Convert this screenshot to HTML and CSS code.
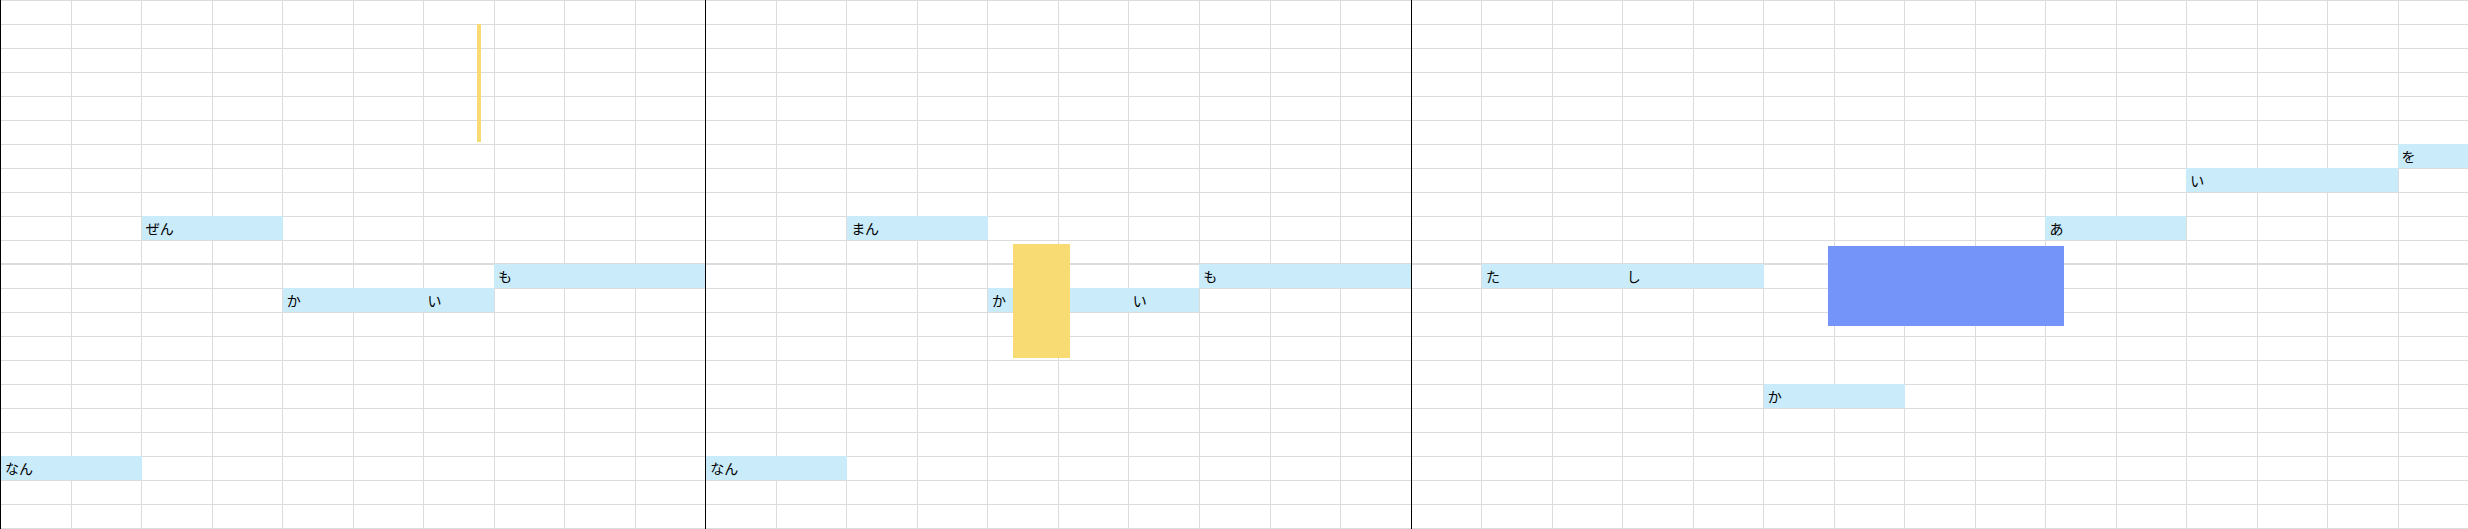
FILE: index.html
```html
<!DOCTYPE html>
<html lang="ja">

<head>
    <meta charset="UTF-8">
    <title>ピアノロール</title>
    <link rel="stylesheet" href="styles.css">
</head>

<body>
    <!-- ロール全体 -->
    <div class="roll">

        <!-- 1小節目 -->
        <div class="bar bar-10">
            <div class="col"></div><div class="col"></div><div class="col"></div><div class="col"></div><div class="col"></div>
            <div class="col"></div><div class="col"></div><div class="col"></div><div class="col"></div><div class="col"></div>

            <div class="note" style="--x:2;--w:2;--y:9">ぜん</div>
            <div class="note" style="--x:7;--w:3;--y:11">も</div>
            <div class="note" style="--x:4;--w:2;--y:12">か</div>
            <div class="note" style="--x:6;--w:1;--y:12">い</div>
            <div class="note" style="--x:0;--w:2;--y:19">なん</div>

            <div class="cursor"></div>
        </div>

        <!-- 2小節目 -->
        <div class="bar bar-10">
            <div class="col"></div><div class="col"></div><div class="col"></div><div class="col"></div><div class="col"></div>
            <div class="col"></div><div class="col"></div><div class="col"></div><div class="col"></div><div class="col"></div>

            <div class="note" style="--x:2;--w:2;--y:9">まん</div>
            <div class="note" style="--x:7;--w:3;--y:11">も</div>
            <div class="note" style="--x:4;--w:2;--y:12">か</div>
            <div class="note" style="--x:6;--w:1;--y:12">い</div>
            <div class="note" style="--x:0;--w:2;--y:19">なん</div>

            <div class="marker"></div>
        </div>

        <!-- 3小節目 -->
        <div class="bar bar-15">
            <div class="col"></div><div class="col"></div><div class="col"></div><div class="col"></div><div class="col"></div>
            <div class="col"></div><div class="col"></div><div class="col"></div><div class="col"></div><div class="col"></div>
            <div class="col"></div><div class="col"></div><div class="col"></div><div class="col"></div><div class="col"></div>

            <div class="note" style="--x:14;--w:1;--y:6">を</div>
            <div class="note" style="--x:11;--w:3;--y:7">い</div>
            <div class="note" style="--x:9;--w:2;--y:9">あ</div>
            <div class="note" style="--x:1;--w:2;--y:11">た</div>
            <div class="note" style="--x:3;--w:2;--y:11">し</div>
            <div class="note" style="--x:5;--w:2;--y:16">か</div>

            <div class="selection"></div>
        </div>

    </div>
</body>

</html>
```

FILE: styles.css
```css
/* 全体 */
body {
    margin: 0;
    background-color: #fff;
    font-family: "Noto Sans CJK JP", "Noto Sans", sans-serif;
    color: #000;
}

/* ロール */
.roll {
    display: flex;
    height: 529px;
    overflow: hidden;
}

/* 小節: 横線は背景で描く */
.bar {
    position: relative;
    display: flex;
    box-sizing: border-box;
    border-left: 1px solid #000;
    background-image:
        linear-gradient(to bottom, transparent 263px, #dcdcdc 263px, #dcdcdc 265px, transparent 265px),
        linear-gradient(to bottom, #dcdcdc 1px, transparent 1px);
    background-size: 100% 100%, 100% 24px;
    background-repeat: no-repeat, repeat;
}

.bar-10 {
    flex: 10 1 0;
    --col: 10%;
}

.bar-15 {
    flex: 15 1 0;
    --col: 6.6667%;
}

/* 縦線 */
.col {
    flex: 1 1 0;
    box-sizing: border-box;
    border-left: 1px solid #dcdcdc;
}

.col:first-child {
    border-left: none;
}

/* ノート */
.note {
    position: absolute;
    left: calc(var(--x) * var(--col));
    width: calc(var(--w) * var(--col));
    top: calc(var(--y) * 24px);
    height: 24px;
    box-sizing: border-box;
    padding-left: 4px;
    background-color: #c9ebfa;
    font-size: 14px;
    line-height: 24px;
    white-space: nowrap;
}

/* 再生位置 */
.cursor {
    position: absolute;
    left: 476px;
    top: 24px;
    width: 4px;
    height: 118px;
    background-color: #f9db74;
}

/* 黄色のマーカー */
.marker {
    position: absolute;
    left: 307px;
    top: 244px;
    width: 57px;
    height: 114px;
    background-color: #f9db74;
}

/* 選択範囲 */
.selection {
    position: absolute;
    left: 416px;
    top: 246px;
    width: 236px;
    height: 80px;
    background-color: #7594f9;
}
```
